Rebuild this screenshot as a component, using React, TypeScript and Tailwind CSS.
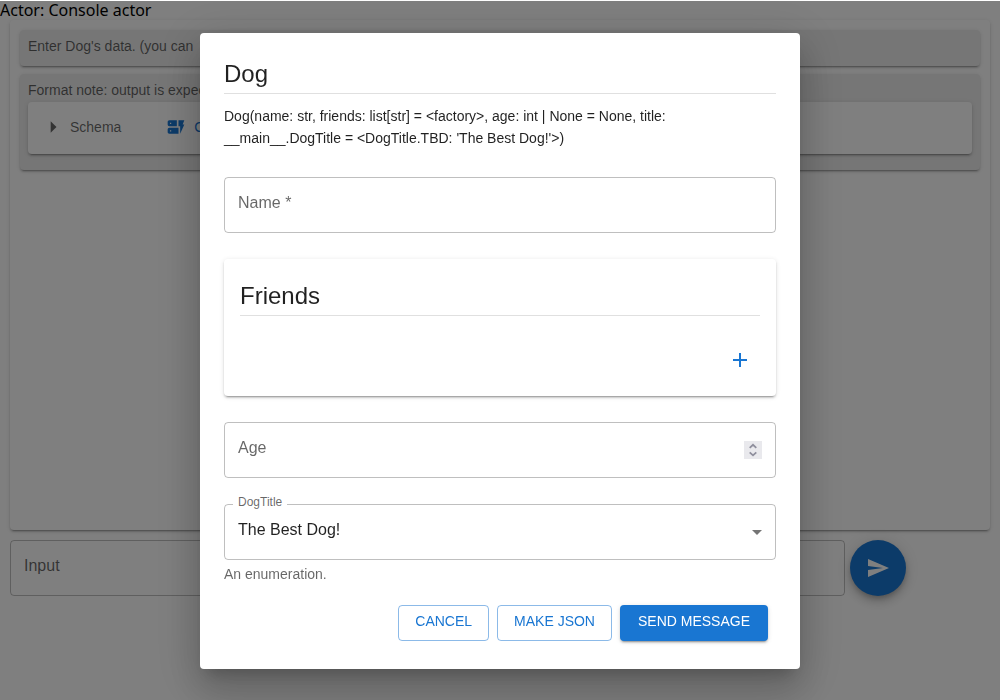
import { useState, type ReactNode } from "react";
import { MdAdd, MdArrowDropDown, MdArrowRight, MdDynamicForm, MdSend } from "react-icons/md";

const raised =
  "rounded shadow-[0_3px_1px_-2px_rgba(0,0,0,0.2),0_2px_2px_0_rgba(0,0,0,0.14),0_1px_5px_0_rgba(0,0,0,0.12)]";
const outline = "rounded border border-black/25 hover:border-black/80";
const fieldInput = "h-14 w-full bg-transparent px-[13px] pb-1.5 text-base text-black/87 outline-none";

function Message({ text, children }: { text: string; children?: ReactNode }) {
  return (
    <article className={`${raised} bg-[#ececec] px-2 pt-1.5 pb-2 text-sm text-black/60`}>
      <p className="h-[22px] leading-5">{text}</p>
      {children}
    </article>
  );
}

function TextField({
  id,
  label,
  type = "text",
  children,
}: {
  id: string;
  label: string;
  type?: string;
  children?: ReactNode;
}) {
  const [value, setValue] = useState("");
  return (
    <div className={`${outline} relative flex h-14 items-center`}>
      <input
        id={id}
        type={type}
        value={value}
        onChange={(e) => setValue(e.target.value)}
        className={`${fieldInput} [appearance:textfield]`}
      />
      <label
        htmlFor={id}
        className={`pointer-events-none absolute inset-y-0 left-[13px] flex items-center pb-1 text-base text-black/60 ${value ? "invisible" : ""}`}
      >
        {label}
      </label>
      {children}
    </div>
  );
}

function Stepper() {
  return (
    <button type="button" aria-label="Change age" className="mr-[13px] size-[18px] shrink-0 bg-[#e9e9ed]">
      <svg viewBox="0 0 18 18" className="size-[18px]" fill="none" stroke="#8f8f9d" strokeWidth="1.8">
        <path d="M5.700 6.800 9 3.800 12.300 6.800M5.700 11.400 9 14.400 12.300 11.400" />
      </svg>
    </button>
  );
}

function SectionTitle({ children }: { children: ReactNode }) {
  return <h2 className="border-b border-black/12 pb-0.5 text-2xl leading-[34px] text-black/87">{children}</h2>;
}

const actionButton = "flex h-9 items-center rounded pb-1 text-sm uppercase";

function DogDialog() {
  return (
    <div className="fixed inset-x-0 top-px bottom-0 flex items-center justify-center bg-black/50">
      <form
        role="dialog"
        aria-label="Dog"
        onSubmit={(e) => e.preventDefault()}
        className="w-full max-w-[600px] rounded bg-white px-6 pt-6 pb-7 shadow-[0_11px_15px_-7px_rgba(0,0,0,0.2),0_24px_38px_3px_rgba(0,0,0,0.14),0_9px_46px_8px_rgba(0,0,0,0.12)]"
      >
        <SectionTitle>Dog</SectionTitle>
        <p className="mt-[11px] mb-7 text-sm leading-[22px] text-black/87">
          Dog(name: str, friends: list[str] = &lt;factory&gt;, age: int | None = None, title: __main__.DogTitle =
          &lt;DogTitle.TBD: 'The Best Dog!'&gt;)
        </p>

        <div className="flex flex-col gap-[26px]">
          <TextField id="name" label="Name *" />

          <section className={`${raised} px-4 pt-5 pb-4`}>
            <SectionTitle>Friends</SectionTitle>
            <div className="mt-6 flex justify-end">
              <button type="button" aria-label="Add friend" className="p-2 text-[#1976d2]">
                <MdAdd className="size-6" />
              </button>
            </div>
          </section>

          <TextField id="age" label="Age" type="number">
            <Stepper />
          </TextField>

          <div>
            <div className={`${outline} relative h-14`}>
              <label
                htmlFor="dog-title"
                className="absolute -top-[11px] left-2 bg-white px-[5px] text-xs leading-4 text-black/60"
              >
                DogTitle
              </label>
              <select id="dog-title" defaultValue="best" className={`${fieldInput} appearance-none`}>
                <option value="best">The Best Dog!</option>
              </select>
              <MdArrowDropDown className="pointer-events-none absolute top-[15px] right-1.5 size-6 text-black/54" />
            </div>
            <p className="mt-1 text-sm text-black/60">An enumeration.</p>
          </div>
        </div>

        <div className="mt-[21px] mr-2 flex justify-end gap-2">
          <button type="button" className={`${actionButton} border border-[#1976d2]/50 px-4 text-[#1976d2]`}>
            Cancel
          </button>
          <button type="button" className={`${actionButton} border border-[#1976d2]/50 px-4 text-[#1976d2]`}>
            Make JSON
          </button>
          <button
            type="submit"
            className={`${actionButton} bg-[#1976d2] px-[18px] text-white shadow-[0_3px_1px_-2px_rgba(0,0,0,0.2),0_2px_2px_0_rgba(0,0,0,0.14),0_1px_5px_0_rgba(0,0,0,0.12)]`}
          >
            Send message
          </button>
        </div>
      </form>
    </div>
  );
}

export default function App() {
  return (
    <div className="min-h-screen bg-white font-['Liberation_Sans',Arial,sans-serif]">
      <h1 className="h-5 font-['Noto_Sans',sans-serif] text-base leading-5 text-black">Actor: Console actor</h1>
      <main className="px-2.5">
        <div className={`${raised} flex h-[calc(100vh-190px)] flex-col gap-2 p-2.5`}>
          <Message text="Enter Dog's data. (you can" />
          <Message text="Format note: output is expected">
            <div className={`${raised} mb-2 flex h-[52px] items-center bg-white px-[11px] pb-0.5`}>
              <button type="button" className="flex items-center gap-[3px]">
                <MdArrowRight className="size-7" />
                Schema
              </button>
              <button type="button" className="ml-[45px] flex items-center gap-2 text-[#1976d2]">
                <MdDynamicForm className="size-5" />
                Call
              </button>
            </div>
          </Message>
        </div>
        <div className="mt-2.5 flex gap-[5px] pr-[84px]">
          <div className="flex-1">
            <TextField id="message" label="Input" />
          </div>
          <button
            type="button"
            aria-label="Send"
            className="flex size-14 items-center justify-center rounded-full bg-[#1976d2] text-white shadow-[0_3px_5px_-1px_rgba(0,0,0,0.2),0_6px_10px_0_rgba(0,0,0,0.14),0_1px_18px_0_rgba(0,0,0,0.12)]"
          >
            <MdSend className="size-6" />
          </button>
        </div>
      </main>
      <DogDialog />
    </div>
  );
}
